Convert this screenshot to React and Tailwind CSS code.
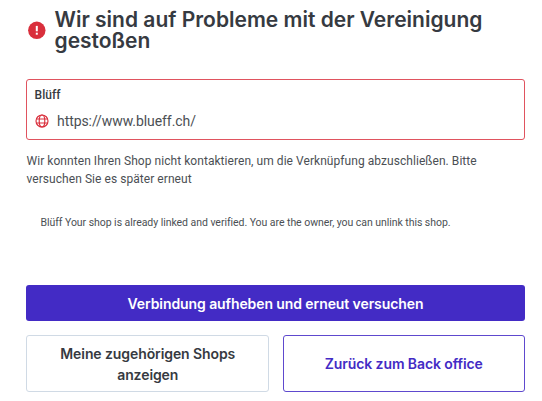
function ErrorIcon() {
  return (
    <svg width="18" height="18" viewBox="0 0 18 18" className="shrink-0">
      <circle cx="8.8" cy="9.3" r="8.7" fill="#d92f3c" />
      <path d="M8.8 4.9v5.4" stroke="#fff" strokeWidth="2" />
      <path d="M8.8 11.7v2" stroke="#fff" strokeWidth="2" />
    </svg>
  );
}

function GlobeIcon() {
  return (
    <svg
      width="14"
      height="14"
      viewBox="0 0 14 14"
      fill="none"
      stroke="#d92f3c"
      strokeWidth="1.15"
      className="shrink-0"
    >
      <circle cx="7" cy="7" r="6" />
      <ellipse cx="7" cy="7" rx="2.8" ry="6" />
      <path d="M1.5 5h11M1.5 9h11" />
    </svg>
  );
}

function ShopCard({ name, url }) {
  return (
    <div className="h-[61px] rounded-[3px] border border-[#e0535f] px-[7.5px] pt-[7px]">
      <div className="text-[12px] leading-4 font-medium tracking-[0.08px] text-[#363a41]">
        {name}
      </div>
      <div className="mt-[8px] flex items-center gap-2 pl-[0.5px]">
        <GlobeIcon />
        <span className="text-[14px] leading-5 tracking-[-0.07px]">{url}</span>
      </div>
    </div>
  );
}

function App() {
  return (
    <main className="h-[401px] w-[542px] overflow-hidden bg-white pt-[9px] pr-[17px] pl-[26px] font-['Roboto',sans-serif] text-[#4b4f54]">
      <header className="flex h-[42px] items-center gap-[8.5px] pl-[2px]">
        <ErrorIcon />
        <h1 className="font-['Inter',sans-serif] text-[21px] leading-[21px] font-semibold text-[#363a41]">
          Wir sind auf Probleme mit der Vereinigung
          <br />
          gestoßen
        </h1>
      </header>

      <section className="mt-[28px]">
        <ShopCard name="Blüff" url="https://www.blueff.ch/" />
        <p className="mt-[13px] pl-[0.5px] text-[12px] leading-[17.5px] tracking-[0.055px]">
          Wir konnten Ihren Shop nicht kontaktieren, um die Verknüpfung
          abzuschließen. Bitte
          <br />
          versuchen Sie es später erneut
        </p>
        <p className="mt-[27px] pl-[14.5px] text-[10.5px] leading-4 tracking-[-0.048px]">
          Blüff Your shop is already linked and verified. You are the owner, you
          can unlink this shop.
        </p>
      </section>

      {/* Actions */}
      <div className="mt-[54px] grid grid-cols-2 gap-[14px] font-['Inter',sans-serif] text-[14px] leading-[21px] font-semibold tracking-[-0.09px]">
        <button className="col-span-2 h-9 rounded-[3px] bg-[#432bc5] text-white">
          Verbindung aufheben und erneut versuchen
        </button>
        <button className="h-[57px] rounded-[3px] border border-[#d0dae5] pl-px text-[#363a41]">
          Meine zugehörigen Shops
          <br />
          anzeigen
        </button>
        <button className="h-[57px] rounded-[3px] border border-[#5e49ce] text-[#432bc5]">
          Zurück zum Back office
        </button>
      </div>
    </main>
  );
}

export default App;
